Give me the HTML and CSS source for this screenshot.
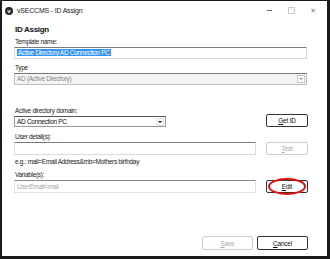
FILE: index.html
```html
<!DOCTYPE html>
<html lang="en">
<head>
  <meta charset="UTF-8">
  <title>vSECCMS - ID Assign</title>
  <link rel="stylesheet" href="styles.css">
</head>
<body>
  <div class="window">
    <!-- Barra de título -->
    <div class="titlebar">
      <span class="app-icon">v</span>
      <span class="title">vSECCMS - ID Assign</span>
      <div class="controls">
        <span class="ctl min"></span>
        <span class="ctl max"></span>
        <span class="ctl close">&#x2715;</span>
      </div>
    </div>

    <!-- Conteúdo -->
    <div class="content">
      <h1>ID Assign</h1>
      <div class="label">Template name:</div>
      <div class="field"><span class="selected">Active Directory AD Connection PC</span></div>

      <div class="label type">Type</div>
      <div class="combo disabled">AD (Active Directory)<span class="arrow"></span></div>

      <div class="row domain">
        <div class="col">
          <div class="label">Active directory domain:</div>
          <div class="combo short">AD Connection PC<span class="arrow dark"></span></div>
        </div>
        <button class="btn"><u>G</u>et ID</button>
      </div>

      <div class="label">User detail(s):</div>
      <div class="row">
        <div class="field wide"></div>
        <button class="btn off"><u>T</u>est</button>
      </div>
      <div class="hint">e.g.: mail=Email Address&amp;mb=Mothers birthday</div>

      <div class="label">Variable(s):</div>
      <div class="row">
        <div class="field wide disabled">UserEmail=mail</div>
        <button class="btn edit"><u>E</u>dit<span class="ring"></span></button>
      </div>

      <div class="footer">
        <button class="btn wide-btn off"><u>S</u>ave</button>
        <button class="btn wide-btn"><u>C</u>ancel</button>
      </div>
    </div>
  </div>
</body>
</html>
```

FILE: styles.css
```css
/* Reset básico */
* {
  margin: 0;
  padding: 0;
  box-sizing: border-box;
}
body {
  font-family: 'Liberation Sans', Arial, sans-serif;
  font-size: 6.5px;
  letter-spacing: -0.3px;
  color: #111;
  background: #fff;
}
/* Janela */
.window {
  width: 330px;
  height: 259px;
  background: #fff;
  border-style: solid;
  border-color: #1b1b1b;
  border-width: 1px 3px 3px 2px;
  display: flex;
  flex-direction: column;
}
.titlebar {
  height: 19px;
  display: flex;
  align-items: center;
  padding-left: 3px;
}
.app-icon {
  width: 8px;
  height: 8px;
  border-radius: 50%;
  background: #2a2a2a;
  color: #fff;
  font-size: 6px;
  letter-spacing: 0;
  line-height: 8px;
  text-align: center;
  font-weight: bold;
  margin-right: 4px;
}
.title {
  font-size: 7px;
  letter-spacing: -0.2px;
  color: #222;
}
.controls {
  margin-left: auto;
  display: flex;
  align-items: center;
}
.ctl {
  width: 22px;
  height: 19px;
  display: flex;
  align-items: center;
  justify-content: center;
  position: relative;
}
.min::before {
  content: "";
  width: 5px;
  height: 1px;
  background: #666;
}
.max::before {
  content: "";
  width: 5px;
  height: 5px;
  border: 1px solid #ccc;
}
.close {
  font-family: 'DejaVu Sans', sans-serif;
  font-size: 7px;
  color: #777;
  margin-right: 3px;
}
/* Formulário */
.content {
  flex: 1;
  padding: 5px 20px 0 12px;
  display: flex;
  flex-direction: column;
}
h1 {
  font-size: 8px;
  line-height: 10px;
  font-weight: bold;
  color: #111;
  margin-bottom: 2px;
  padding-left: 1px;
}
.label {
  line-height: 9px;
  color: #222;
  margin-bottom: 1px;
  padding-left: 1px;
}
.label.type {
  margin-top: 4px;
}
.field {
  height: 12px;
  border: 1px solid #dadada;
  border-top-color: #7a7a7a;
  padding: 1px 2px;
  line-height: 8px;
  background: #fff;
}
.selected {
  background: #3293f0;
  color: #fff;
  padding: 0 1px;
}
.combo {
  height: 12px;
  border: 1px solid #bcbcbc;
  border-top-color: #777;
  line-height: 10px;
  padding-left: 2px;
  position: relative;
  color: #111;
}
.combo.disabled {
  background: #f4f4f4;
  color: #888;
}
.arrow {
  position: absolute;
  right: 1px;
  top: 1px;
  width: 8px;
  height: 8px;
  border: 1px solid #c8c8c8;
  background: #fafafa;
}
.arrow::after {
  content: "";
  position: absolute;
  left: 1px;
  top: 2px;
  border-left: 2px solid transparent;
  border-right: 2px solid transparent;
  border-top: 2px solid #999;
}
.arrow.dark {
  border-color: #e4e4e4;
}
.arrow.dark::after {
  border-top-color: #111;
}
.row {
  display: flex;
  align-items: flex-start;
  justify-content: space-between;
}
.domain {
  margin-top: 21px;
  align-items: flex-end;
  margin-bottom: 5px;
}
.col {
  width: 152px;
}
.combo.short {
  height: 11px;
  border-color: #999;
  border-top-color: #555;
  line-height: 9px;
}
.field.wide {
  width: 242px;
  height: 13px;
}
.field.disabled {
  color: #aaa;
  border-color: #e0e0e0;
  border-top-color: #888;
  line-height: 9px;
}
.hint {
  line-height: 9px;
  margin-top: 2px;
  margin-bottom: 4px;
  color: #222;
  padding-left: 1px;
}
/* Botões */
.btn {
  font-family: inherit;
  font-size: 6.5px;
  letter-spacing: -0.2px;
  width: 42px;
  height: 13px;
  background: #fff;
  border: 1px solid #333;
  border-radius: 2px;
  color: #111;
  line-height: 11px;
  position: relative;
  margin-right: -1px;
}
.btn.off {
  border-color: #ccc;
  color: #aaa;
}
.edit .ring {
  position: absolute;
  left: 1px;
  top: -3px;
  width: 38px;
  height: 17px;
  border: 2px solid #e01010;
  border-radius: 50%;
}
.footer {
  margin-top: auto;
  margin-bottom: 6px;
  display: flex;
  justify-content: flex-end;
  gap: 5px;
}
.wide-btn {
  width: 51px;
  height: 14px;
}
```
